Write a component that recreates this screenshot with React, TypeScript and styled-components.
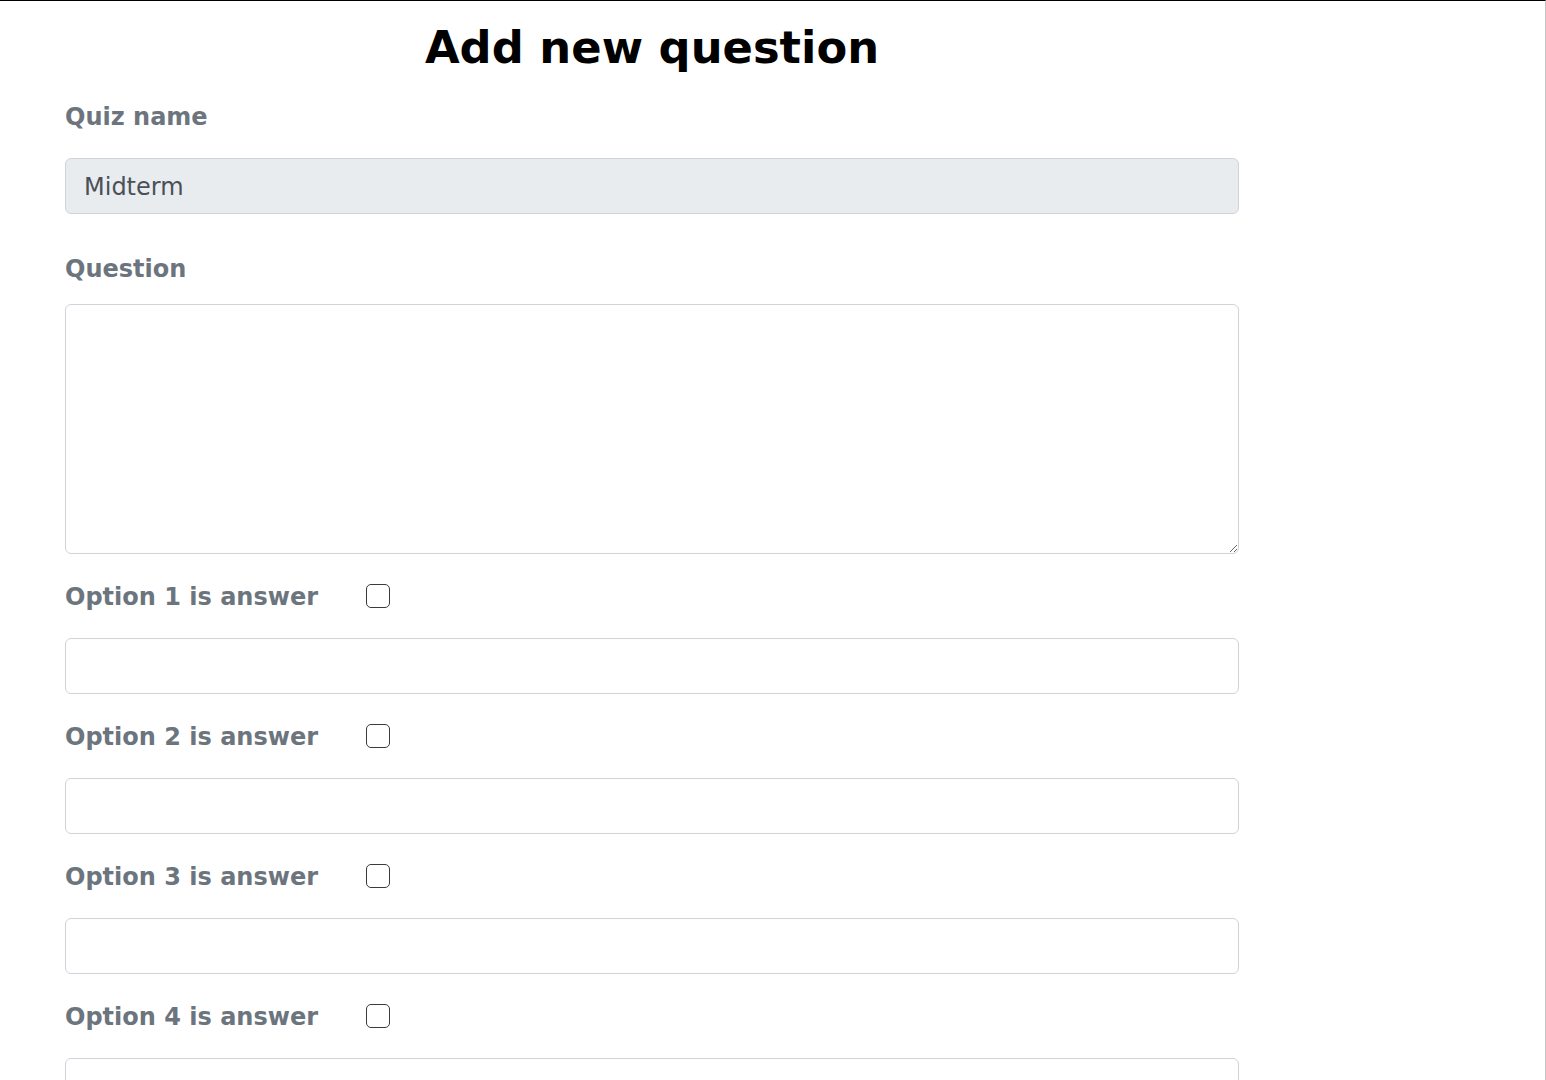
import React from 'react';
import styled, { createGlobalStyle } from 'styled-components';

const GlobalStyle = createGlobalStyle`
  html, body {
    margin: 0;
    padding: 0;
    background: #fff;
  }
  body {
    font-family: 'DejaVu Sans', 'Liberation Sans', sans-serif;
  }
  * {
    box-sizing: border-box;
  }
`;

const Page = styled.div`
  width: 1546px;
  min-height: 1080px;
  border-top: 1px solid #000;
  border-right: 1px solid #c4c4c4;
`;

const Form = styled.form`
  width: 1174px;
  margin-left: 65px;
  display: flex;
  flex-direction: column;
`;

const Title = styled.h1`
  margin: 0 0 23px;
  padding-top: 20px;
  text-align: center;
  font-size: 44.8px;
  line-height: 54px;
  font-weight: 700;
  color: #000;
`;

const Label = styled.label<{ $after?: number }>`
  display: flex;
  align-items: center;
  height: 36px;
  padding-top: 2px;
  margin-bottom: ${(p) => p.$after ?? 24}px;
  font-size: 24px;
  font-weight: 700;
  color: #6c757d;
`;

const Input = styled.input<{ $after?: number }>`
  display: block;
  width: 100%;
  height: 56px;
  margin: 0 0 ${(p) => p.$after ?? 24}px;
  padding: 2px 18px 0;
  font-family: 'DejaVu Sans', sans-serif;
  font-size: 24px;
  color: #495057;
  background: #fff;
  border: 1px solid #ced4da;
  border-radius: 6px;
  outline: none;

  &:disabled {
    background: #e9ecef;
    color: #495057;
    opacity: 1;
  }
`;

const TextArea = styled.textarea`
  display: block;
  width: 100%;
  height: 250px;
  margin: 0 0 24px;
  padding: 8px 18px;
  font-family: 'DejaVu Sans', sans-serif;
  font-size: 24px;
  color: #495057;
  border: 1px solid #ced4da;
  border-radius: 6px;
  resize: vertical;
  outline: none;
`;

const Check = styled.input`
  appearance: none;
  width: 24px;
  height: 24px;
  margin: -2px 0 0 48px;
  border: 1.5px solid #3a3a3a;
  border-radius: 5px;
  background: #fff;

  &:checked {
    background: #0d6efd;
    border-color: #0d6efd;
  }
`;

const options = [1, 2, 3, 4];

export default function App() {
  return (
    <>
      <GlobalStyle />
      <Page>
        <Form onSubmit={(e) => e.preventDefault()}>
          <Title>Add new question</Title>

          <Label htmlFor="quiz">Quiz name</Label>
          <Input id="quiz" value="Midterm" disabled readOnly $after={36} />

          <Label htmlFor="question" $after={18}>
            Question
          </Label>
          <TextArea id="question" />

          {options.map((n) => (
            <React.Fragment key={n}>
              <Label>
                Option {n} is answer
                <Check type="checkbox" />
              </Label>
              <Input type="text" />
            </React.Fragment>
          ))}
        </Form>
      </Page>
    </>
  );
}
